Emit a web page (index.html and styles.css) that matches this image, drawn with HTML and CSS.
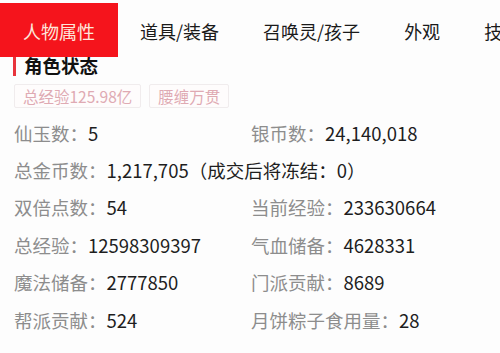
FILE: index.html
```html
<!DOCTYPE html>
<html lang="zh">
<head>
<meta charset="utf-8">
<link rel="stylesheet" href="styles.css">
</head>
<body>
<div class="page">
  <nav class="tabs">
    <div class="tab active">人物属性</div>
    <div class="tab">道具/装备</div>
    <div class="tab">召唤灵/孩子</div>
    <div class="tab">外观</div>
    <div class="tab">技能</div>
  </nav>
  <section class="section">
    <h2 class="heading">角色状态</h2>
    <div class="badges">
      <span class="badge">总经验125.98亿</span>
      <span class="badge">腰缠万贯</span>
    </div>
    <div class="grid">
      <div class="item"><span class="label">仙玉数：</span><span class="value">5</span></div>
      <div class="item"><span class="label">银币数：</span><span class="value">24,140,018</span></div>
      <div class="item wide"><span class="label">总金币数：</span><span class="value">1,217,705（成交后将冻结：0）</span></div>
      <div class="item"><span class="label">双倍点数：</span><span class="value">54</span></div>
      <div class="item"><span class="label">当前经验：</span><span class="value">233630664</span></div>
      <div class="item"><span class="label">总经验：</span><span class="value">12598309397</span></div>
      <div class="item"><span class="label">气血储备：</span><span class="value">4628331</span></div>
      <div class="item"><span class="label">魔法储备：</span><span class="value">2777850</span></div>
      <div class="item"><span class="label">门派贡献：</span><span class="value">8689</span></div>
      <div class="item"><span class="label">帮派贡献：</span><span class="value">524</span></div>
      <div class="item"><span class="label">月饼粽子食用量：</span><span class="value">28</span></div>
    </div>
  </section>
</div>
</body>
</html>
```

FILE: styles.css
```css
* { box-sizing: border-box; margin: 0; padding: 0; }
html, body { width: 500px; height: 353px; overflow: hidden; background: #fdfdfd; }
body { font-family: "Noto Sans CJK SC", "Noto Sans", sans-serif; color: #222; }
.page { padding-top: 3px; }
.tabs {
  display: flex;
  height: 54px;
  white-space: nowrap;
  overflow: hidden;
  position: relative;
  z-index: 1;
}
.tab {
  flex: none;
  padding: 0 22px;
  font-size: 18px;
  line-height: 56px;
  color: #1a1a1a;
}
.tab.active {
  background: #f5141c;
  color: #fde6da;
  padding: 0 23px;
}
.section { padding: 0 14px; margin-top: -3px; }
.heading {
  font-size: 18.5px;
  font-weight: 700;
  color: #111;
  border-left: 3px solid #e8343c;
  padding-left: 8px;
  margin-left: -1px;
  height: 22px;
  line-height: 22px;
}
.badges { display: flex; gap: 8px; margin-top: 8px; }
.badge {
  font-size: 15.5px;
  line-height: 22px;
  padding: 0 8px;
  color: #dfaab3;
  border: 1px solid #f0eced;
  border-radius: 2px;
  background: #fefcfc;
}
.grid {
  display: grid;
  grid-template-columns: 237px 1fr;
  grid-auto-rows: 37.4px;
  margin-top: 6px;
  font-size: 18.5px;
  align-items: center;
}
.item { white-space: nowrap; }
.wide { grid-column: 1 / 3; }
.label { color: #8d8d8d; }
.value { color: #1e1e1e; }
```
